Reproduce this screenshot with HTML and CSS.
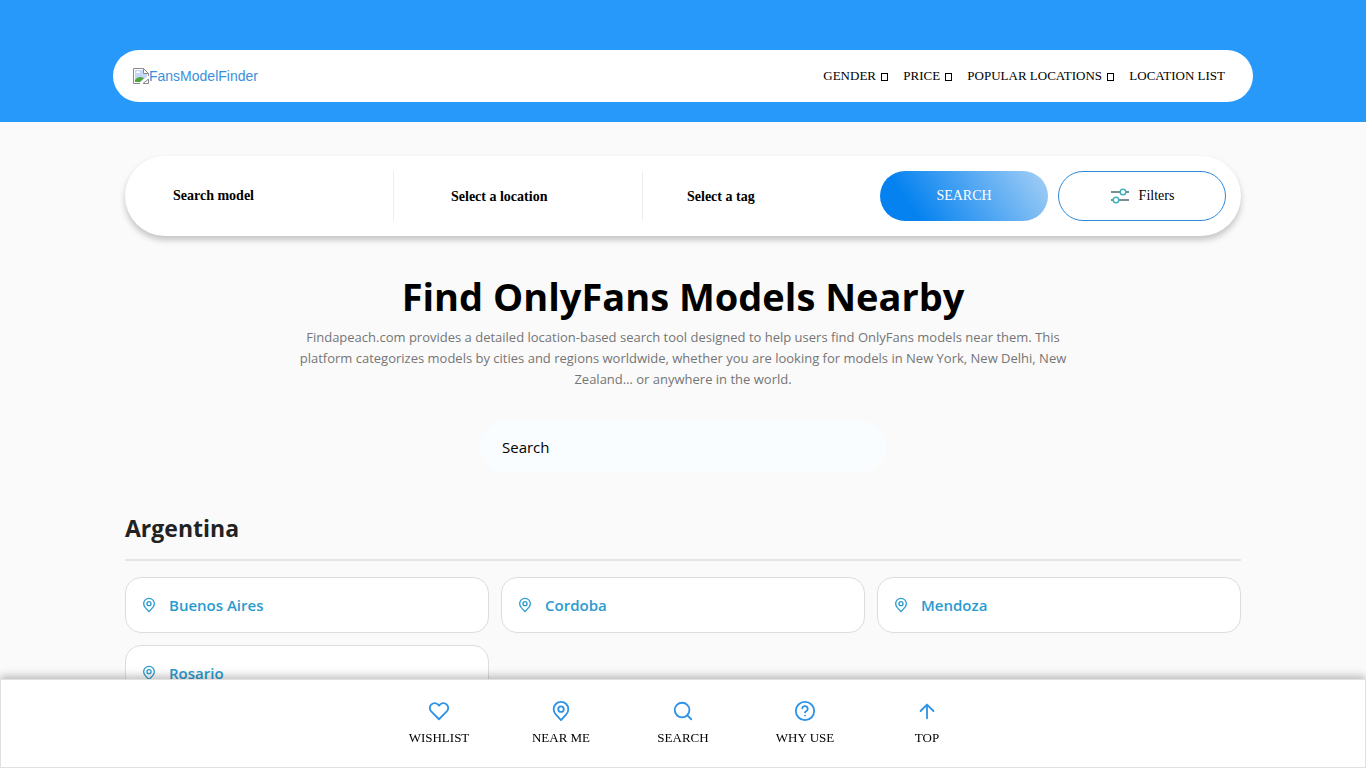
FILE: index.html
```html
<!DOCTYPE html>
<html lang="en">
<head>
  <meta charset="UTF-8">
  <meta name="viewport" content="width=device-width, initial-scale=1">
  <title>Find OnlyFans Models Nearby</title>
  <link rel="stylesheet" href="styles.css">
</head>
<body>
  <svg width="0" height="0" class="sprite" aria-hidden="true">
    <symbol id="pin" viewBox="0 0 24 24">
      <path d="M12 22l-5.500-6C4.800 14 4 12 4 10a8 8 0 0 1 16 0c0 2-.8 4-2.500 6z"/>
      <circle cx="12" cy="10" r="3"/>
    </symbol>
  </svg>

  <header class="header">
    <div class="navbar">
      <a class="logo" href="#">
        <svg width="16" height="16" viewBox="0 0 16 16" aria-hidden="true">
          <path d="M.5.5h10l5 5v10H.5z" fill="#fff"/>
          <path d="M2 2h8v4h4v3l-7 5H2z" fill="#c5d7f3"/>
          <path d="M3 5a2 2 0 0 1 4 0z" fill="#fff"/>
          <path d="M2 14v-2c2-3 5-4 9-2l-4 4z" fill="#4ea63a"/>
          <path d="M7 15.500H.5V.5h10l5 5V8M10.500.5v5h5M10 15.500h5.500V11z" fill="none" stroke="#8a8a8a"/>
        </svg><span>FansModelFinder</span>
      </a>
      <nav class="menu">
        <a href="#">GENDER <i class="caret"></i></a>
        <a href="#">PRICE <i class="caret"></i></a>
        <a href="#">POPULAR LOCATIONS <i class="caret"></i></a>
        <a href="#">LOCATION LIST</a>
      </nav>
    </div>
  </header>

  <main class="container">
    <form class="searchbar">
      <div class="field field-model">
        <input type="text" placeholder="Search model" aria-label="Search model">
      </div>
      <div class="field field-location">
        <select aria-label="Select a location">
          <option>Select a location</option>
        </select>
      </div>
      <div class="field field-tag">
        <select aria-label="Select a tag">
          <option>Select a tag</option>
        </select>
      </div>
      <div class="actions">
        <button type="submit" class="btn btn-search">SEARCH</button>
        <button type="button" class="btn btn-filters">
          <svg width="20" height="16" viewBox="0 0 20 16" fill="none" stroke-width="1.500" aria-hidden="true">
            <path d="M1 4h9M16 4h3M1 12h2M9 12h10" stroke="#4d6b70"/>
            <circle cx="13" cy="4" r="2.800" stroke="#43b0bd"/>
            <circle cx="6" cy="12" r="2.800" stroke="#43b0bd"/>
          </svg>
          Filters
        </button>
      </div>
    </form>

    <section class="intro">
      <h1>Find OnlyFans Models Nearby</h1>
      <p>Findapeach.com provides a detailed location-based search tool designed to help users find OnlyFans models near them. This platform categorizes models by cities and regions worldwide, whether you are looking for models in New York, New Delhi, New Zealand… or anywhere in the world.</p>
      <input type="text" class="city-search" placeholder="Search" aria-label="Search">
    </section>

    <section class="country">
      <h2>Argentina</h2>
      <div class="cities">
        <a class="city" href="#"><svg><use href="#pin"/></svg>Buenos Aires</a>
        <a class="city" href="#"><svg><use href="#pin"/></svg>Cordoba</a>
        <a class="city" href="#"><svg><use href="#pin"/></svg>Mendoza</a>
        <a class="city" href="#"><svg><use href="#pin"/></svg>Rosario</a>
      </div>
    </section>
  </main>

  <nav class="bottom-bar">
    <a href="#">
      <svg viewBox="0 0 24 24"><path d="M12 21l-8.500-8.500a5.300 5.300 0 0 1 0-7.500 5.300 5.300 0 0 1 7.500 0l1 1 1-1a5.300 5.300 0 0 1 7.500 0 5.300 5.300 0 0 1 0 7.500z"/></svg>
      WISHLIST
    </a>
    <a href="#">
      <svg><use href="#pin"/></svg>
      NEAR ME
    </a>
    <a href="#">
      <svg viewBox="0 0 24 24"><circle cx="11" cy="11" r="8"/><path d="M16.700 16.700L21 21"/></svg>
      SEARCH
    </a>
    <a href="#">
      <svg viewBox="0 0 24 24"><circle cx="12" cy="12" r="10"/><path d="M9 9a3 3 0 0 1 5.900 1c0 2-2.900 2.800-2.900 3.500M12 17h.01"/></svg>
      WHY USE
    </a>
    <a href="#">
      <svg viewBox="0 0 24 24"><path d="M12 20V5M5 12l7-7 7 7"/></svg>
      TOP
    </a>
  </nav>
</body>
</html>
```
FILE: styles.css
```css
* {
  box-sizing: border-box;
}
body {
  margin: 0;
  background: #fafafa;
  color: #000;
  font-family: "Open Sans", "Noto Sans", sans-serif;
}
a {
  color: inherit;
  text-decoration: none;
}
.sprite {
  position: absolute;
}

/* header */
.header {
  background: #2699fb;
  padding: 50px 16px 20px;
}
.navbar {
  display: flex;
  align-items: center;
  justify-content: space-between;
  max-width: 1140px;
  height: 52px;
  margin: 0 auto;
  padding: 0 28px 0 20px;
  background: #fff;
  border-radius: 26px;
}
.logo {
  display: flex;
  align-items: center;
  color: #3a8fdc;
  font: 14px "Liberation Sans", Arial, sans-serif;
}
.menu {
  display: flex;
  align-items: center;
  gap: 14px;
  font: 13px "Liberation Serif", "Times New Roman", serif;
}
.caret {
  display: inline-block;
  width: 7px;
  height: 8px;
  margin: 0 1px 0 2px;
  border: 1px solid #000;
  vertical-align: -1px;
}

/* search */
.container {
  max-width: 1148px;
  margin: 0 auto;
  padding: 34px 16px 0;
}
.searchbar {
  display: grid;
  grid-template-columns: 269fr 249fr 237fr auto;
  align-items: center;
  height: 80px;
  padding-right: 15px;
  background: #fff;
  border-radius: 40px;
  box-shadow: 0 4px 6px rgba(0,0,0,0.22);
}
.field {
  display: flex;
  align-items: center;
  height: 50px;
}
.field input, .field select {
  width: 100%;
  height: 18px;
  padding: 0;
  border: 0;
  outline: 0;
  background: none;
  color: #000;
  font: bold 14px "Liberation Serif", "Times New Roman", serif;
  appearance: none;
}
.field input::placeholder, .city-search::placeholder {
  color: #000;
  opacity: 1;
}
.field-model {
  padding-left: 48px;
  border-right: 1px solid #ededed;
}
.field-location {
  padding-left: 57px;
  border-right: 1px solid #ededed;
}
.field-tag {
  padding-left: 44px;
}
.actions {
  display: flex;
  gap: 10px;
}
.btn {
  display: flex;
  align-items: center;
  justify-content: center;
  gap: 9px;
  width: 168px;
  height: 50px;
  border: 0;
  border-radius: 25px;
  font: 14px "Liberation Serif", "Times New Roman", serif;
  cursor: pointer;
}
.btn-search {
  background: linear-gradient(55deg, #0582f0 20%, #9ccbf5 95%);
  color: #fff;
}
.btn-filters {
  background: #fff;
  border: 1px solid #2e87d8;
  color: #000;
}

/* intro */
.intro {
  display: flex;
  flex-direction: column;
  align-items: center;
  padding-top: 35px;
  text-align: center;
}
.intro h1 {
  margin: 0;
  font-size: 38px;
  line-height: 50px;
}
.intro p {
  max-width: 800px;
  margin: 6px 0 0;
  color: #757575;
  font-size: 13px;
  line-height: 21px;
}
.city-search {
  width: 100%;
  max-width: 406px;
  height: 52px;
  margin-top: 31px;
  padding: 0 22px;
  border: 0;
  border-radius: 26px;
  background: #fafdff;
  color: #000;
  font: 15px "Open Sans", "Noto Sans", sans-serif;
}

/* cities */
.country h2 {
  margin: 40px 0 16px;
  padding-bottom: 16px;
  border-bottom: 2px solid #e5e5e5;
  color: #222;
  font-size: 23px;
  line-height: 30px;
}
.cities {
  display: grid;
  grid-template-columns: repeat(3, 1fr);
  gap: 12px;
}
.city {
  display: flex;
  align-items: center;
  gap: 12px;
  height: 56px;
  padding: 0 15px;
  background: #fff;
  border: 1px solid #ddd;
  border-radius: 16px;
  color: #2a9bcf;
  font-size: 15px;
  font-weight: 600;
}
.city svg {
  width: 16px;
  height: 16px;
}
.city svg, .bottom-bar svg {
  fill: none;
  stroke: currentColor;
  stroke-width: 2;
  stroke-linecap: round;
  stroke-linejoin: round;
}

/* bottom bar */
.bottom-bar {
  position: fixed;
  left: 0;
  right: 0;
  bottom: 0;
  display: flex;
  justify-content: center;
  height: 89px;
  padding-top: 20px;
  background: #fff;
  border: 1px solid #e0e0e0;
  box-shadow: 0 -3px 8px rgba(0,0,0,0.25);
}
.bottom-bar a {
  display: flex;
  flex-direction: column;
  align-items: center;
  gap: 8px;
  width: 122px;
  font: 13px "Liberation Serif", "Times New Roman", serif;
}
.bottom-bar svg {
  width: 22px;
  height: 22px;
  color: #2e93e6;
}
```
